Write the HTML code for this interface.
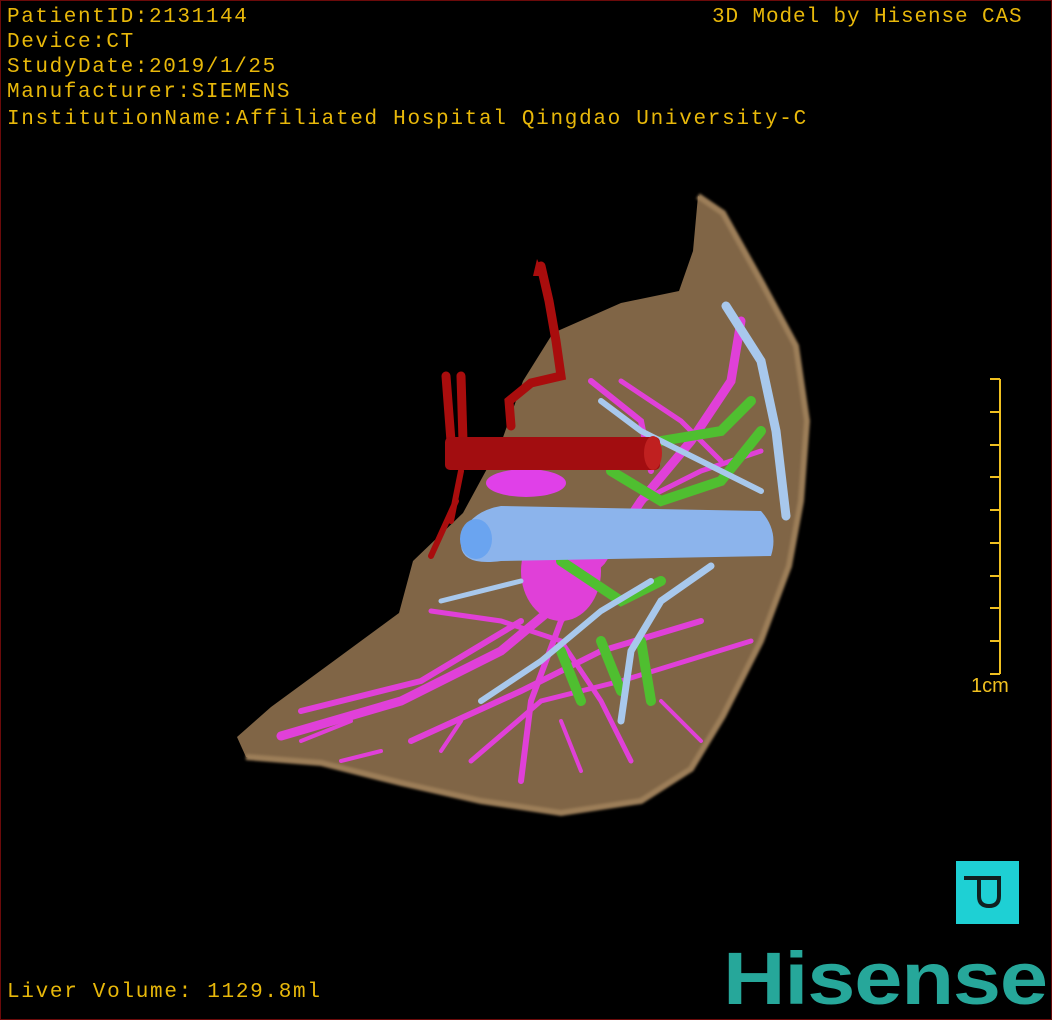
<!DOCTYPE html>
<html><head><meta charset="utf-8"><style>
html,body{margin:0;padding:0;background:#000;}
#w{position:relative;width:1050px;height:1018px;border:1px solid #6b0a0a;overflow:hidden;background:#000;}
.t{position:absolute;color:#e8b80a;font-family:"Liberation Mono","DejaVu Sans Mono",monospace;font-size:21px;line-height:25px;white-space:pre;letter-spacing:1.6px}
</style></head><body><div id="w">
<svg width="1050" height="1018" style="position:absolute;left:0;top:0">
<defs><filter id="b"><feGaussianBlur stdDeviation="1.2"/></filter></defs>
<path d="M697,195 L722,212 L760,280 L795,345 L806,420 L800,500 L788,565 L760,640 L722,715 L690,768 L640,800 L560,812 L480,800 L400,782 L320,762 L245,756 L236,736 L270,706 L330,662 L398,612 L412,560 L462,512 L500,442 L522,380 L552,332 L620,302 L678,290 L692,250 Z" fill="#806546"/>
<path d="M697,195 L722,212 L760,280 L795,345 L806,420 L800,500 L788,565 L760,640 L722,715 L690,768 L640,800 L560,812 L480,800 L400,782 L320,762 L245,756" fill="none" stroke="#9c7e58" stroke-width="6" filter="url(#b)"/>
<g stroke="#e040d8" stroke-linecap="round" fill="none">
<path d="M280,735 L400,700 L500,650 L560,600 L600,560 L640,500 L690,440 L730,380 L740,320" stroke-width="9"/>
<path d="M300,710 L420,680 L520,620" stroke-width="6"/>
<path d="M410,740 L520,690 L600,650 L700,620" stroke-width="6"/>
<path d="M470,760 L540,700 L620,680 L750,640" stroke-width="5"/>
<path d="M600,560 L560,620 L530,700 L520,780" stroke-width="6"/>
<path d="M640,500 L700,470 L760,450" stroke-width="5"/>
<path d="M620,380 L680,420 L720,460" stroke-width="5"/>
<path d="M590,380 L640,420 L650,470" stroke-width="6"/>
<path d="M430,610 L500,620 L560,640 L600,700 L630,760" stroke-width="5"/>
<path d="M350,720 L300,740 M380,750 L340,760 M460,720 L440,750 M560,720 L580,770 M660,700 L700,740" stroke-width="4"/>
</g>
<ellipse cx="560" cy="570" rx="40" ry="50" fill="#e040d8"/>
<ellipse cx="525" cy="482" rx="40" ry="14" fill="#e040e8"/>
<g stroke="#4fbf30" stroke-linecap="round" stroke-width="10" fill="none">
<path d="M610,470 L660,500 L720,480 L760,430"/><path d="M560,650 L580,700 M600,640 L620,690 M640,640 L650,700 M560,560 L620,600 L660,580"/><path d="M660,440 L720,430 L750,400"/>
</g>
<g stroke="#a8c8ec" stroke-linecap="round" fill="none">
<path d="M725,305 L760,360 L775,430 L785,515" stroke-width="9"/>
<path d="M600,400 L640,430 L700,460 L760,490" stroke-width="6"/>
<path d="M710,565 L660,600 L630,650 L620,720" stroke-width="7"/>
<path d="M480,700 L540,660 L600,610 L650,580" stroke-width="6"/>
<path d="M440,600 L520,580" stroke-width="5"/>
</g>
<path d="M460,535 Q470,510 500,505 L760,510 Q778,530 770,555 L500,560 Q462,565 460,545 Z" fill="#8cb4ec"/>
<ellipse cx="475" cy="538" rx="16" ry="20" fill="#6aa4f0"/>
<g stroke="#a90d0d" stroke-linecap="round" fill="none">
<path d="M540,265 L548,300 L555,340 L560,375 L530,382 L508,400 L510,425" stroke-width="9"/>
<path d="M445,375 L450,440 M460,375 L462,440" stroke-width="9"/>
<path d="M460,470 L450,520 M455,500 L430,555" stroke-width="6"/>
</g>
<path d="M536,258 L544,275 L532,275 Z" fill="#a90d0d"/>
<rect x="444" y="436" width="215" height="33" rx="5" fill="#a20d10"/>
<ellipse cx="652" cy="452" rx="9" ry="17" fill="#c02020"/>
<g stroke="#f0c020" stroke-width="2">
<line x1="999" y1="378" x2="999" y2="673"/>
<path d="M989,378H999M989,411H999M989,444H999M989,476H999M989,509H999M989,542H999M989,575H999M989,607H999M989,640H999M989,673H999"/>
</g>
<rect x="955" y="860" width="63" height="63" fill="#1ed0d4"/>
<path d="M963,877 L998,877 L998,895 Q998,905 988,905 Q978,905 978,895 L978,877" fill="none" stroke="#102020" stroke-width="4"/>
</svg>
<div class="t" style="left:6px;top:4px">PatientID:2131144
Device:CT
StudyDate:2019/1/25
Manufacturer:SIEMENS</div>
<div class="t" style="left:6px;top:106px;letter-spacing:1.7px">InstitutionName:Affiliated Hospital Qingdao University-C</div>
<div class="t" style="left:711px;top:4px;letter-spacing:0.9px">3D Model by Hisense CAS</div>
<div class="t" style="left:6px;top:979px;letter-spacing:1.7px">Liver Volume: 1129.8ml</div>
<div class="t" style="left:970px;top:673px;font-family:'Liberation Sans',sans-serif;font-size:20px;color:#f0c020;letter-spacing:0">1cm</div>
<div style="position:absolute;left:722px;top:938px;font-family:'Liberation Sans',sans-serif;font-weight:bold;font-size:74px;line-height:80px;color:#26a79a;letter-spacing:-1px;transform:scaleX(1.17);transform-origin:0 0">Hisense</div>
</div></body></html>
